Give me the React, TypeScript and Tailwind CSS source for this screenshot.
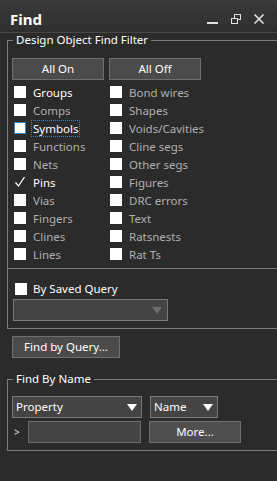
import React from "react";

const left = [
  { label: "Groups", bright: true },
  { label: "Comps" },
  { label: "Symbols", bright: true, focus: true },
  { label: "Functions" },
  { label: "Nets" },
  { label: "Pins", bright: true, checked: true },
  { label: "Vias" },
  { label: "Fingers" },
  { label: "Clines" },
  { label: "Lines" },
];

const right = [
  "Bond wires",
  "Shapes",
  "Voids/Cavities",
  "Cline segs",
  "Other segs",
  "Figures",
  "DRC errors",
  "Text",
  "Ratsnests",
  "Rat Ts",
];

type Item = { label: string; bright?: boolean; checked?: boolean; focus?: boolean };

function Check({ item }: { item: Item }) {
  return (
    <div className="flex items-center h-[18px]">
      {item.checked ? (
        <div className="w-[12px] h-[12px] flex items-center justify-center">
          <svg width="12" height="12" viewBox="0 0 12 12">
            <path d="M1.5 6.5 L4.5 10 L10.5 1" stroke="#fff" strokeWidth="1.3" fill="none" />
          </svg>
        </div>
      ) : (
        <div
          className={
            item.focus
              ? "w-[12px] h-[12px] bg-white border border-[#3d84c6]"
              : "w-[12px] h-[12px] bg-white"
          }
        />
      )}
      <span
        className={
          "ml-[6px] leading-[15px] px-[1px] " +
          (item.bright ? "text-white" : "text-[#b0b0b0]") +
          (item.focus ? " outline outline-1 outline-dotted outline-[#3d84c6]" : "")
        }
      >
        {item.label}
      </span>
    </div>
  );
}

function Arrow({ dim }: { dim?: boolean }) {
  return (
    <svg width="10" height="7" viewBox="0 0 10 7">
      <path d="M0 0 H10 L5 7 Z" fill={dim ? "#6c6c6c" : "#ffffff"} />
    </svg>
  );
}

export default function App() {
  return (
    <div
      className="w-[277px] h-[481px] overflow-hidden bg-[#2b2b2b] text-white text-[11.5px]"
      style={{ fontFamily: '"Noto Sans", "Liberation Sans", sans-serif' }}
    >
      {/* title bar */}
      <div className="h-[33px] pt-[6px] flex items-center bg-gradient-to-b from-[#3a3a3a] to-[#2f2f2f] border-b border-[#474747]">
        <span className="ml-[10px] text-[15px] font-bold">Find</span>
        <div className="ml-auto flex items-center">
          <div className="w-[11px] h-[2px] bg-[#e0e0e0] mt-[8px]" />
          <svg className="ml-[13px]" width="10" height="10" viewBox="0 0 10 10">
            <rect x="3.5" y="0.5" width="6" height="5" stroke="#e0e0e0" fill="none" />
            <rect x="0.5" y="4.5" width="6" height="5" stroke="#e0e0e0" fill="#333" />
          </svg>
          <svg className="ml-[13px] mr-[13px]" width="10" height="10" viewBox="0 0 10 10">
            <path d="M0.5 0.5 L9.5 9.5 M9.5 0.5 L0.5 9.5" stroke="#e8e8e8" strokeWidth="1.5" />
          </svg>
        </div>
      </div>

      {/* design object filter */}
      <fieldset className="ml-[7px] w-[290px] border border-[#7c7c7c]">
        <legend className="ml-[5px] px-[3px] leading-[14px]">Design Object Find Filter</legend>
        <div className="pt-[11px] pl-[4px]">
          <div className="flex gap-[5px]">
            <button className="w-[92px] h-[22px] bg-[#4b4b4b] border border-[#6f6f6f] text-white">All On</button>
            <button className="w-[92px] h-[22px] bg-[#4b4b4b] border border-[#6f6f6f] text-white">All Off</button>
          </div>
          <div className="flex mt-[3px] pl-[2px]">
            <div className="w-[96px]">
              {left.map((it) => (
                <Check key={it.label} item={it} />
              ))}
            </div>
            <div>
              {right.map((r) => (
                <Check key={r} item={{ label: r }} />
              ))}
            </div>
          </div>
        </div>
        <div className="mt-[5px] border-t border-[#7c7c7c] pt-[14px] pb-[7px] pl-[5px]">
          <div className="flex items-center h-[12px] ml-[2px]">
            <div className="w-[12px] h-[12px] bg-white" />
            <span className="ml-[6px]">By Saved Query</span>
          </div>
          <div className="mt-[4px] w-[155px] h-[22px] bg-[#444444] border border-[#787878] flex items-center justify-end pr-[5px]">
            <Arrow dim />
          </div>
        </div>
      </fieldset>

      <button className="mt-[7px] ml-[12px] w-[108px] h-[22px] bg-[#4b4b4b] border border-[#6f6f6f] text-white">
        Find by Query...
      </button>

      {/* find by name */}
      <fieldset className="mt-[14px] ml-[7px] w-[290px] border border-[#7c7c7c] pb-[7px]">
        <legend className="ml-[5px] px-[3px] leading-[14px]">Find By Name</legend>
        <div className="pt-[10px] pl-[4px]">
          <div className="flex gap-[8px]">
            <div className="w-[130px] h-[22px] bg-[#444444] border border-[#787878] flex items-center pl-[3px] pr-[4px]">
              <span>Property</span>
              <span className="ml-auto flex"><Arrow /></span>
            </div>
            <div className="w-[68px] h-[22px] bg-[#444444] border border-[#787878] flex items-center pl-[3px] pr-[4px]">
              <span>Name</span>
              <span className="ml-auto flex"><Arrow /></span>
            </div>
          </div>
          <div className="flex items-center mt-[3px]">
            <span className="w-[16px] pl-[2px] text-[10px] text-[#e0e0e0]">&gt;</span>
            <div className="w-[113px] h-[22px] bg-[#444444] border border-[#6c6c6c]" />
            <button className="ml-[8px] w-[92px] h-[22px] bg-[#4f4f4f] border border-[#6f6f6f] text-white">More...</button>
          </div>
        </div>
      </fieldset>
    </div>
  );
}
